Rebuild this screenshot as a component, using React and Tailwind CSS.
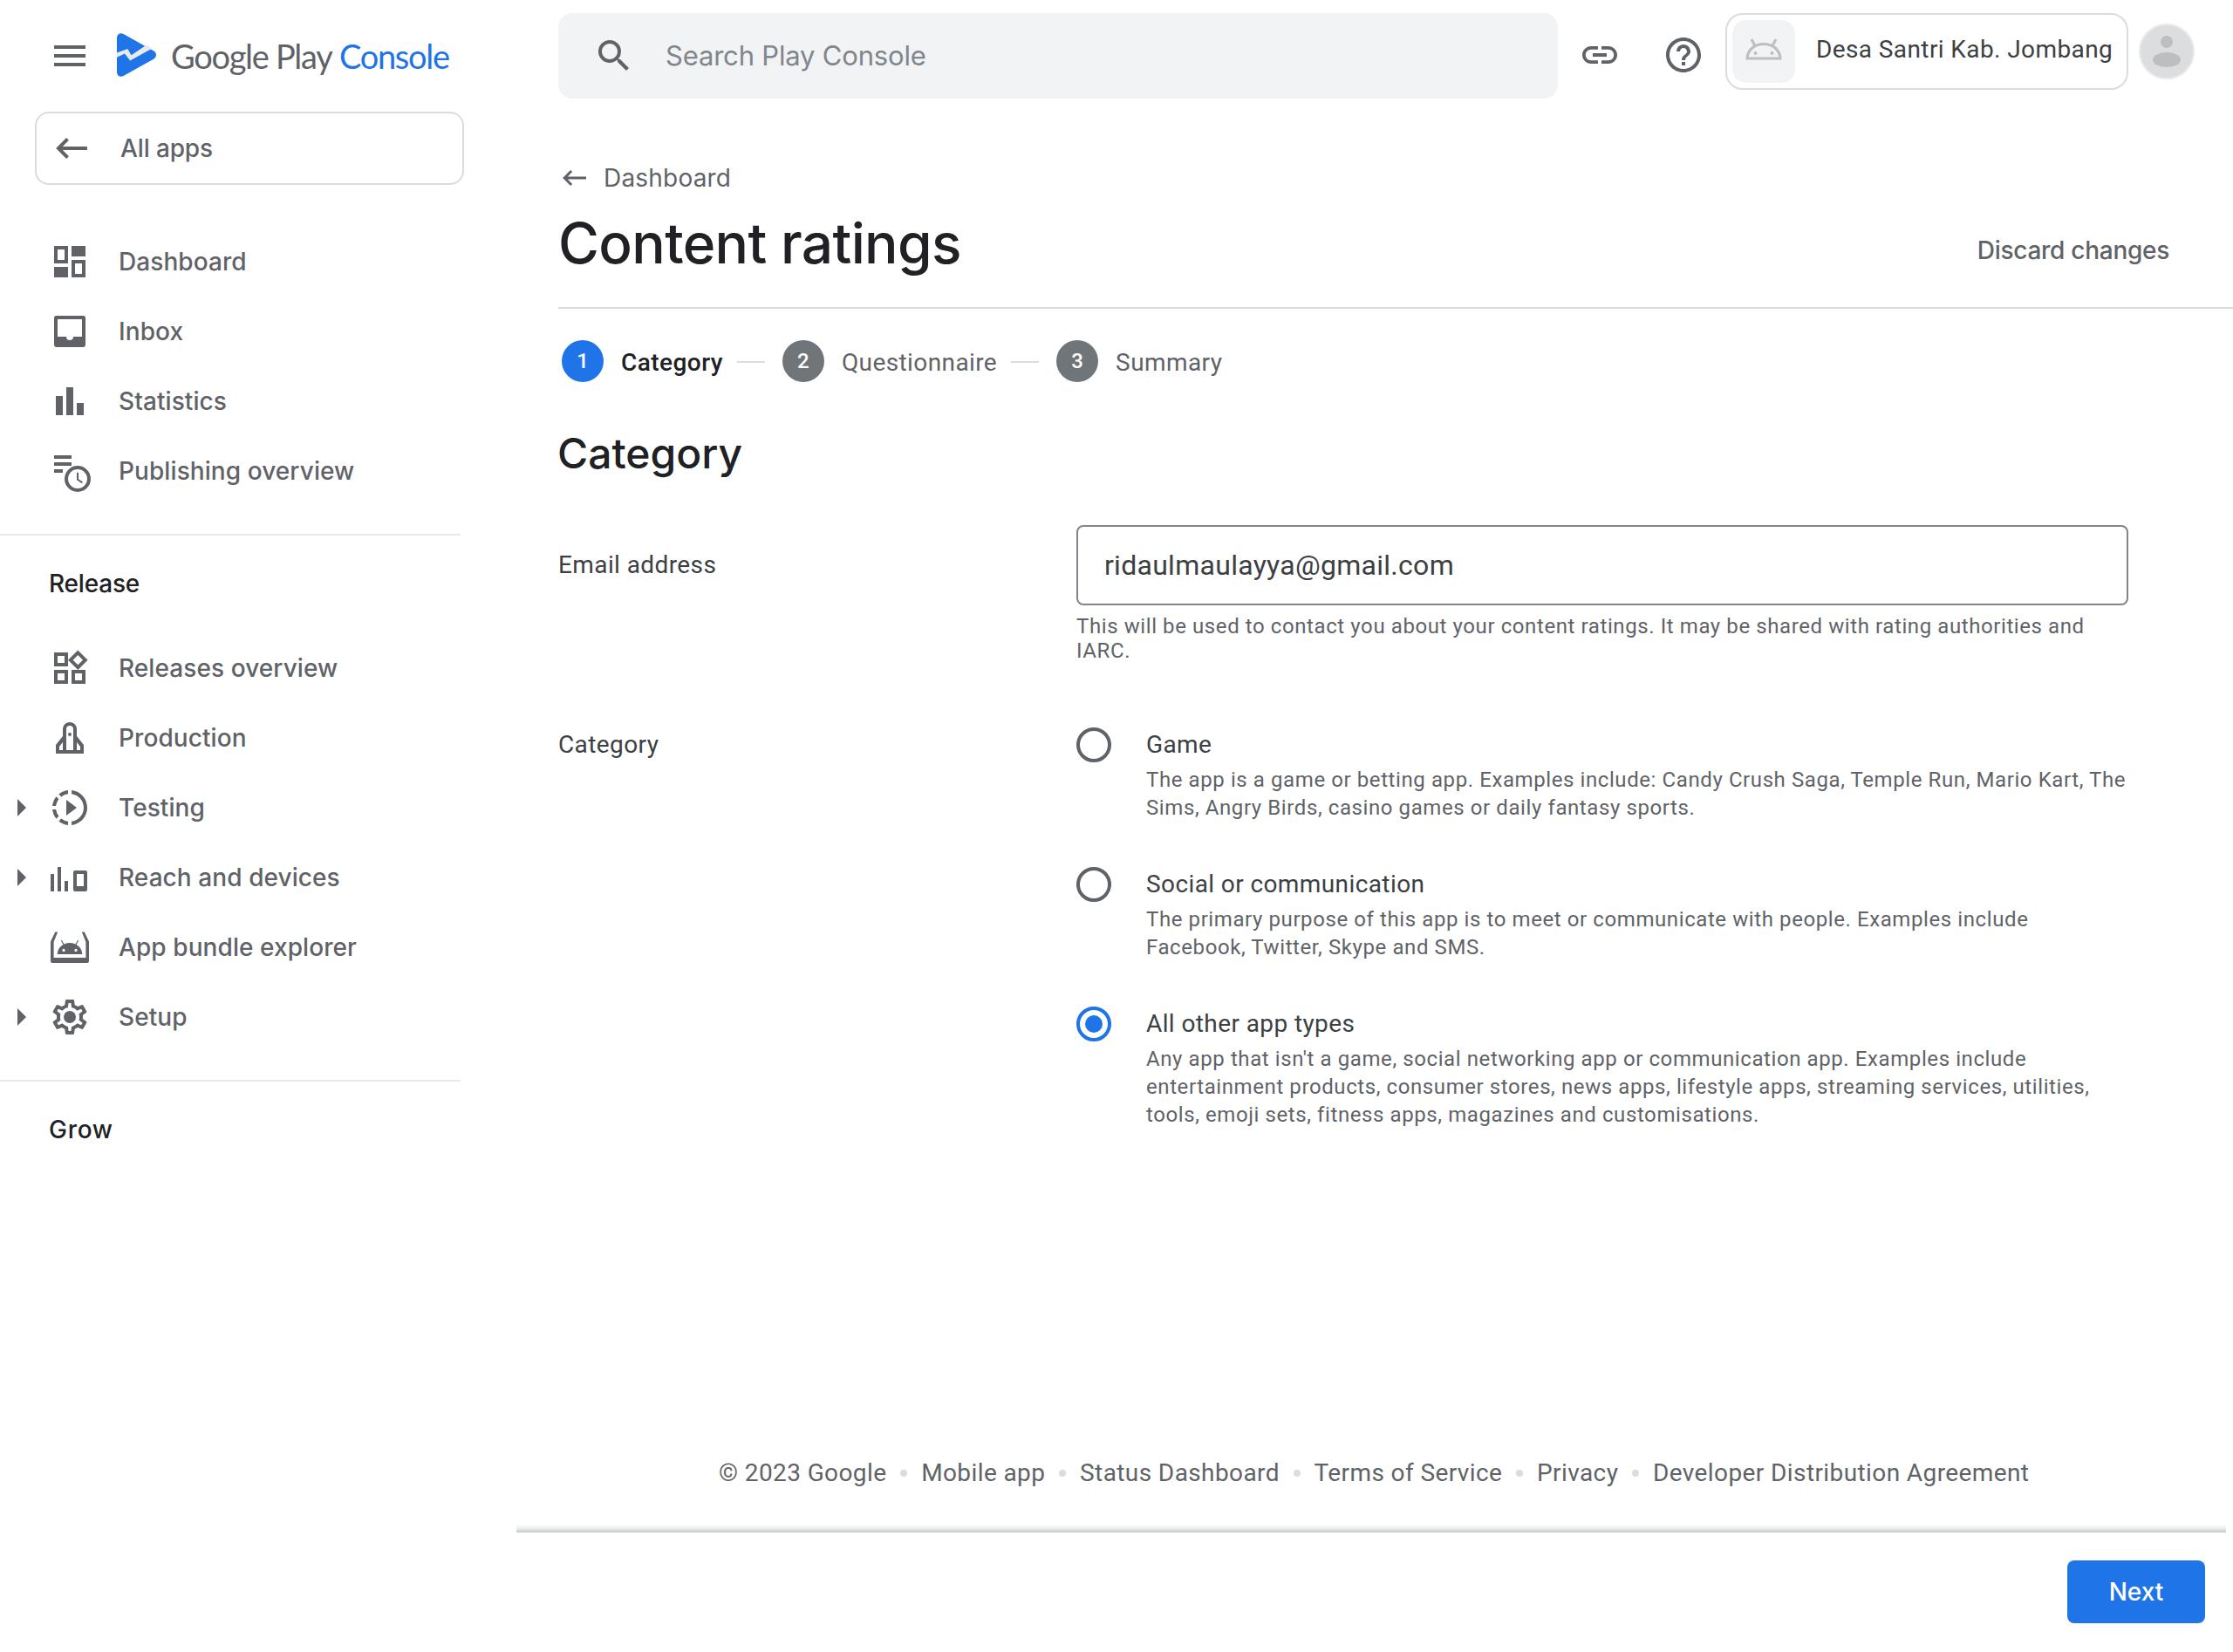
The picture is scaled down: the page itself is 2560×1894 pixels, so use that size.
import React from "react";
import {
  MdSearch,
  MdLink,
  MdHelpOutline,
  MdMenu,
  MdOutlineWidgets,
  MdSlowMotionVideo,
  MdArrowRight,
} from "react-icons/md";

function Glyph({ children }) {
  return (
    <svg viewBox="0 0 24 24" className="size-12 shrink-0 overflow-visible" fill="currentColor" fillRule="evenodd">
      {children}
    </svg>
  );
}

const DashboardIcon = () => (
  <Glyph>
    <path d="M3 3h8v10H3zM5 5v6h4V5zM13 3h8v6h-8zM3 15h8v6H3zM13 11h8v10h-8zM15 13v6h4v-6z" />
  </Glyph>
);

const InboxIcon = () => (
  <Glyph>
    <path d="M4.2 3h15.600a1.200 1.200 0 0 1 1.200 1.200v15.600a1.200 1.200 0 0 1-1.200 1.200H4.200A1.200 1.200 0 0 1 3 19.800V4.200A1.200 1.200 0 0 1 4.200 3zM5 5v10h5a2 2 0 0 0 4 0h5V5z" />
  </Glyph>
);

const StatisticsIcon = () => (
  <Glyph>
    <path d="M4 9h4v11H4zM10 4h4v16h-4zM16 13h4v7h-4z" />
  </Glyph>
);

const PublishingIcon = () => (
  <Glyph>
    <path d="M3 3h10v2H3zM3 7h10v2H3zM3 11h5v2H3z" />
    <circle cx="16.500" cy="16.500" r="6.500" fill="none" stroke="currentColor" strokeWidth="2" />
    <path d="M16.500 12.900v4l2.700 1.800" fill="none" stroke="currentColor" strokeWidth="1" />
  </Glyph>
);

const RocketIcon = () => (
  <Glyph>
    <path d="M8 11V7a4 4 0 0 1 8 0v4l4 5v5H4v-5zM10 19V7a2 2 0 0 1 4 0v12zM8 19v-4.600L6 17v2zM16 19v-4.600l2 2.600v2z" />
    <circle cx="12" cy="10" r="1" />
  </Glyph>
);

const ReachIcon = () => (
  <Glyph>
    <path d="M1 10h2v10H1zM5 6h2v14H5zM9 14h2v6H9zM15 8h6a1 1 0 0 1 1 1v10a1 1 0 0 1-1 1h-6a1 1 0 0 1-1-1V9a1 1 0 0 1 1-1zM16 10v7h4v-7z" />
  </Glyph>
);

const BundleIcon = () => (
  <Glyph>
    <path d="M3.600 3.300h1.500L2.800 9v9h18.400V9l-2.300-5.700h1.500L23 8.800V20a1 1 0 0 1-1 1H2a1 1 0 0 1-1-1V8.800z" />
    <path d="M4.900 16a7.100 6.500 0 0 1 14.200 0zM8.500 12.900a.8.8 0 1 0 0 1.600.8.8 0 0 0 0-1.600zM15.500 12.900a.8.8 0 1 0 0 1.600.8.8 0 0 0 0-1.600z" />
    <path d="M7.200 8l1.400 2.600M16.800 8l-1.400 2.600" fill="none" stroke="currentColor" strokeWidth=".6" />
  </Glyph>
);

const SetupIcon = () => (
  <Glyph>
    <path
      fillRule="nonzero"
      d="M19.430 12.980c.04-.32.07-.64.07-.98 0-.34-.03-.66-.07-.98l2.110-1.650c.19-.15.24-.42.12-.64l-2-3.460a.5.5 0 0 0-.61-.22l-2.490 1c-.52-.4-1.080-.73-1.690-.98l-.38-2.650A.488.488 0 0 0 14 2h-4c-.25 0-.46.18-.49.42l-.38 2.650c-.61.25-1.170.59-1.690.98l-2.490-1a.566.566 0 0 0-.18-.03c-.17 0-.34.09-.43.25l-2 3.460c-.13.22-.07.49.12.64l2.110 1.650c-.04.32-.07.65-.07.98 0 .33.03.66.07.98l-2.110 1.650c-.19.15-.24.42-.12.64l2 3.460a.5.5 0 0 0 .61.22l2.490-1c.52.4 1.080.73 1.690.98l.38 2.650c.03.24.24.42.49.42h4c.25 0 .46-.18.49-.42l.38-2.650c.61-.25 1.170-.59 1.690-.98l2.490 1c.06.02.12.03.18.03.17 0 .34-.09.43-.25l2-3.460c.12-.22.07-.49-.12-.64l-2.110-1.650zm-1.980-1.710c.04.31.05.52.05.73 0 .21-.02.43-.05.73l-.14 1.130.89.7 1.080.84-.7 1.210-1.270-.51-1.040-.42-.9.68c-.43.32-.84.56-1.250.73l-1.060.43-.16 1.130-.2 1.350h-1.400l-.19-1.350-.16-1.130-1.060-.43c-.43-.18-.83-.41-1.230-.71l-.91-.7-1.060.43-1.270.51-.7-1.210 1.080-.84.89-.7-.14-1.130c-.03-.31-.05-.54-.05-.74s.02-.43.05-.73l.14-1.130-.89-.7-1.080-.84.7-1.210 1.270.51 1.040.42.9-.68c.43-.32.84-.56 1.250-.73l1.060-.43.16-1.130.2-1.350h1.390l.19 1.350.16 1.130 1.060.43c.43.18.83.41 1.230.71l.91.7 1.060-.43 1.270-.51.7 1.210-1.070.85-.89.7.14 1.130z"
    />
    <circle cx="12" cy="12" r="3.500" />
  </Glyph>
);

function BackArrow({ className }) {
  return (
    <svg viewBox="0 0 36 24" className={className} fill="none" stroke="currentColor" strokeWidth="4">
      <path d="M36 12H3M13.500 1.400 3 12l10.500 10.600" />
    </svg>
  );
}

function PlayConsoleMark() {
  return (
    <svg viewBox="0 0 45 50" className="h-[50px] w-[45px] shrink-0">
      <path
        fill="#1f74e8"
        d="M0 5.500C0 1.200 3.800-1.200 7.600.9L42 20.300c4 2.300 4 7.100 0 9.400L7.600 49.100C3.800 51.200 0 48.800 0 44.500z"
      />
      <path fill="#e8eaed" d="M0 22.600 12.300 18l4.200 7.300L34 13.500l6.500 4L15.200 31.600 9 23.600 0 27.800z" />
    </svg>
  );
}

function AndroidOutline() {
  return (
    <svg viewBox="0 0 42 26" className="h-[26px] w-[42px]" fill="none" stroke="#bdbebf">
      <path strokeWidth="3" d="M2 23C2.600 13 10.500 6.500 21 6.500S39.400 13 40 23z" />
      <path strokeWidth="3" d="M7 1l4 7.500M35 1l-4 7.500" />
      <circle cx="11.500" cy="17" r="2" fill="#bdbebf" stroke="none" />
      <circle cx="30.500" cy="17" r="2" fill="#bdbebf" stroke="none" />
    </svg>
  );
}

const mainNav = [
  { label: "Dashboard", icon: DashboardIcon },
  { label: "Inbox", icon: InboxIcon },
  { label: "Statistics", icon: StatisticsIcon },
  { label: "Publishing overview", icon: PublishingIcon },
];

const releaseNav = [
  { label: "Releases overview", icon: () => <MdOutlineWidgets className="size-12" /> },
  { label: "Production", icon: RocketIcon },
  { label: "Testing", icon: () => <MdSlowMotionVideo className="size-12" />, expandable: true },
  { label: "Reach and devices", icon: ReachIcon, expandable: true },
  { label: "App bundle explorer", icon: BundleIcon },
  { label: "Setup", icon: SetupIcon, expandable: true },
];

const steps = ["Category", "Questionnaire", "Summary"];

const options = [
  {
    title: "Game",
    lines: [
      "The app is a game or betting app. Examples include: Candy Crush Saga, Temple Run, Mario Kart, The",
      "Sims, Angry Birds, casino games or daily fantasy sports.",
    ],
  },
  {
    title: "Social or communication",
    lines: [
      "The primary purpose of this app is to meet or communicate with people. Examples include",
      "Facebook, Twitter, Skype and SMS.",
    ],
  },
  {
    title: "All other app types",
    checked: true,
    lines: [
      "Any app that isn't a game, social networking app or communication app. Examples include",
      "entertainment products, consumer stores, news apps, lifestyle apps, streaming services, utilities,",
      "tools, emoji sets, fitness apps, magazines and customisations.",
    ],
  },
];

const footerLinks = [
  "© 2023 Google",
  "Mobile app",
  "Status Dashboard",
  "Terms of Service",
  "Privacy",
  "Developer Distribution Agreement",
];

function NavRow({ label, icon: Icon, expandable }) {
  return (
    <a className="flex h-20 items-center text-[#5f6368]">
      <span className="flex w-14 items-center">{expandable && <MdArrowRight className="size-12" />}</span>
      <Icon />
      <span className="ml-8 font-['Inter',sans-serif] text-[28px] leading-10 font-medium tracking-[0.080px]">
        {label}
      </span>
    </a>
  );
}

function Sidebar() {
  return (
    <aside className="flex w-[592px] shrink-0 flex-col">
      <div className="flex h-32 items-start">
        <MdMenu className="mt-10 ml-14 size-12 text-[#5f6368]" />
        <div className="mt-[38px] ml-[30px] flex">
          <PlayConsoleMark />
          <div className="mt-px ml-[17px] flex font-['Lato',sans-serif] text-[38px] leading-[50px] whitespace-nowrap">
            <span className="w-[193px] tracking-[-1.300px] text-[#5f6368]">Google Play</span>
            <span className="tracking-[-1.300px] text-[#1f74e8]">Console</span>
          </div>
        </div>
      </div>
      <button className="ml-10 flex h-[84px] w-[492px] items-center rounded-2xl border-2 border-[#dadce0] pl-[22px] text-[#5f6368]">
        <BackArrow className="h-6 w-9" />
        <span className="ml-[38px] font-['Inter',sans-serif] text-[28px] leading-10 font-medium tracking-[-0.130px]">
          All apps
        </span>
      </button>
      <nav className="mt-12">
        {mainNav.map((n) => (
          <NavRow key={n.label} {...n} />
        ))}
      </nav>
      <hr className="mt-8 w-[528px] border-t-2 border-[#e8eaed]" />
      <h3 className="mt-[35px] ml-14 h-[41px] font-['Inter',sans-serif] text-[28px] leading-10 font-medium tracking-[-0.200px] text-[#202124]">
        Release
      </h3>
      <nav className="mt-9">
        {releaseNav.map((n) => (
          <NavRow key={n.label} {...n} />
        ))}
      </nav>
      <hr className="mt-8 w-[528px] border-t-2 border-[#e8eaed]" />
      <h3 className="mt-[35px] ml-14 font-['Inter',sans-serif] text-[28px] leading-10 font-medium tracking-[0.700px] text-[#202124]">
        Grow
      </h3>
    </aside>
  );
}

function TopBar() {
  return (
    <header className="flex h-[170px] items-start pt-[15px] pl-12">
      <div className="flex h-[98px] w-[1146px] items-center rounded-2xl bg-[#f1f3f4] pl-10">
        <MdSearch className="size-12 text-[#5f6368]" />
        <span className="ml-[35px] font-['Inter',sans-serif] text-[31px] leading-10 tracking-[-0.180px] text-[#80868b]">
          Search Play Console
        </span>
      </div>
      <MdLink className="mt-6 ml-6 size-12 text-[#5f6368]" />
      <MdHelpOutline className="mt-6 ml-12 size-12 text-[#5f6368]" />
      <div className="ml-6 flex h-[88px] w-[462px] items-center rounded-[20px] border-2 border-[#dadce0] pl-[6px]">
        <div className="flex size-[72px] items-center justify-center rounded-2xl bg-[#f1f3f4] pb-1">
          <AndroidOutline />
        </div>
        <span className="ml-6 pb-[4px] text-[28px] leading-10 tracking-[0.400px] whitespace-nowrap text-[#3c4043]">
          Desa Santri Kab. Jombang
        </span>
      </div>
      <div className="mt-3 ml-3 flex size-16 flex-col items-center rounded-full border-2 border-[#e8eaed] bg-[#dcdddf] pt-3">
        <span className="size-[14px] rounded-full bg-[#bdbebf]" />
        <span className="mt-[5px] h-[17px] w-8 rounded-[50%] bg-[#bdbebf]" />
      </div>
    </header>
  );
}

function Radio({ checked }) {
  return checked ? (
    <span className="flex size-10 items-center justify-center rounded-full border-4 border-[#1f74e8]">
      <span className="size-5 rounded-full bg-[#1f74e8]" />
    </span>
  ) : (
    <span className="size-10 rounded-full border-4 border-[#5f6368]" />
  );
}

export default function App() {
  return (
    <div className="flex h-[1894px] w-[2560px] overflow-hidden bg-white font-['Roboto',sans-serif]">
      <Sidebar />
      <div className="flex min-w-0 flex-1 flex-col">
        <TopBar />
        <section className="ml-12 flex h-[184px] items-start justify-between border-b-2 border-[#dadce0] pr-[73px]">
          <div className="font-['Inter',sans-serif]">
            <div className="mt-[14px] flex h-10 items-center text-[#5f6368]">
              <BackArrow className="ml-[5px] h-[18px] w-[27px]" />
              <span className="ml-5 text-[28px] leading-10 tracking-[0.200px]">Dashboard</span>
            </div>
            <h1 className="mt-[15px] text-[64px] leading-[80px] font-medium tracking-[-0.650px] text-[#202124]">
              Content ratings
            </h1>
          </div>
          <button className="mt-[97px] font-['Inter',sans-serif] text-[28px] leading-10 font-medium tracking-[-0.280px] text-[#5f6368]">
            Discard changes
          </button>
        </section>

        <ol className="mt-9 ml-[52px] flex h-12 items-center">
          {steps.map((step, i) => (
            <li key={step} className="flex items-center">
              {i > 0 && <span className="mt-[2px] mr-5 ml-4 h-[2px] w-8 bg-[#dadce0]" />}
              <span
                className={
                  i === 0
                    ? "flex size-12 items-center justify-center rounded-full bg-[#1f74e8] text-2xl leading-8 font-medium text-white"
                    : "flex size-12 items-center justify-center rounded-full bg-[#70757a] text-2xl leading-8 font-medium text-white"
                }
              >
                {i + 1}
              </span>
              <span
                className={
                  i === 0
                    ? "mt-[3px] ml-5 text-[28px] leading-10 font-medium tracking-[0.450px] text-[#202124]"
                    : "mt-[3px] ml-5 text-[28px] leading-10 tracking-[0.400px] text-[#5f6368]"
                }
              >
                {step}
              </span>
            </li>
          ))}
        </ol>

        <h2 className="mt-[52px] ml-[47px] font-['Inter',sans-serif] text-[48px] leading-[60px] font-medium text-[#202124]">
          Category
        </h2>

        <div className="mt-[52px] ml-12 flex">
          <div className="w-[594px] pt-[26px] text-[28px] leading-10 tracking-[0.400px] text-[#3c4043]">
            Email address
          </div>
          <div className="w-[1206px]">
            <div className="flex h-[92px] items-center rounded-lg border-2 border-[#80868b] pl-[30px] text-[32px] leading-10 tracking-[0.280px] text-[#3c4043]">
              ridaulmaulayya@gmail.com
            </div>
            <p className="mt-[10px] text-2xl leading-7 tracking-[0.590px] text-[#5f6368]">
              <span className="block">
                This will be used to contact you about your content ratings. It may be shared with rating authorities
                and
              </span>
              <span className="block">IARC.</span>
            </p>
          </div>
        </div>

        <div className="mt-[73px] ml-12 flex">
          <div className="w-[594px] pt-px text-[28px] leading-10 tracking-[0.400px] text-[#3c4043]">Category</div>
          <div className="flex w-[1206px] flex-col">
            {options.map((o) => (
              <label key={o.title} className="flex min-h-[160px] items-start">
                <span className="mt-[1px] flex w-20">
                  <Radio checked={o.checked} />
                </span>
                <span className="flex flex-col whitespace-nowrap">
                  <span className="mt-px text-[28px] leading-10 tracking-[0.400px] text-[#3c4043]">{o.title}</span>
                  <span className="mt-1 flex flex-col text-2xl leading-8 tracking-[0.590px] text-[#5f6368]">
                    {o.lines.map((l) => (
                      <span key={l}>{l}</span>
                    ))}
                  </span>
                </span>
              </label>
            ))}
          </div>
        </div>

        <footer className="mt-auto flex h-[78px] items-start pl-[232px] text-[28px] leading-10 tracking-[0.400px] text-[#5f6368]">
          {footerLinks.map((l, i) => (
            <span key={l} className="flex items-center whitespace-nowrap">
              {i > 0 && <span className="mr-4 ml-[15.700px] size-2 rounded-full bg-[#dadce0]" />}
              {l}
            </span>
          ))}
        </footer>
        <div className="mr-2 h-[10px] bg-linear-to-b from-white via-[#eceeef] to-[#c4c7c9]" />
        <div className="flex h-[137px] items-start justify-end pt-8 pr-8">
          <button className="h-[72px] w-[158px] rounded-lg bg-[#1f74e8] font-['Inter',sans-serif] text-[28px] leading-10 font-medium text-white">
            Next
          </button>
        </div>
      </div>
    </div>
  );
}
